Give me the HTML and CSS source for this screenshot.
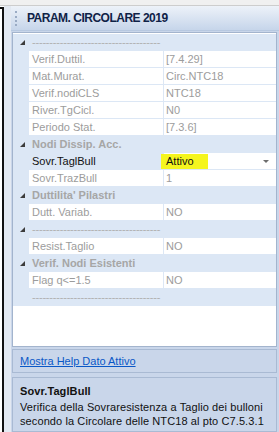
FILE: index.html
```html
<!DOCTYPE html>
<html lang="it">
<head>
    <meta charset="UTF-8">
    <title>Param. Circolare 2019</title>
    <link rel="stylesheet" href="styles.css">
</head>
<body>
    <div class="window">
        <div class="topstrip"></div>
        <div class="main">
            <div class="side"><div class="side-frame"></div></div>
            <div class="side-gap"></div>
            <div class="dock">
                <div class="title">
                    <span class="grip"></span>
                    <span class="title-text">PARAM. CIRCOLARE 2019</span>
                </div>

                <div class="grid">
                    <!-- categoria senza nome -->
                    <div class="row cat">
                        <span class="gutter"><svg width="5" height="5" viewBox="0 0 5 5"><polygon points="5,0 5,5 0,5"/></svg></span>
                        <span class="cat-name dashes">-------------------------------------</span>
                    </div>
                    <div class="row">
                        <span class="gutter"></span>
                        <span class="name">Verif.Duttil.</span>
                        <span class="value">[7.4.29]</span>
                    </div>
                    <div class="row">
                        <span class="gutter"></span>
                        <span class="name">Mat.Murat.</span>
                        <span class="value">Circ.NTC18</span>
                    </div>
                    <div class="row">
                        <span class="gutter"></span>
                        <span class="name">Verif.nodiCLS</span>
                        <span class="value">NTC18</span>
                    </div>
                    <div class="row">
                        <span class="gutter"></span>
                        <span class="name">River.TgCicl.</span>
                        <span class="value">N0</span>
                    </div>
                    <div class="row">
                        <span class="gutter"></span>
                        <span class="name">Periodo Stat.</span>
                        <span class="value">[7.3.6]</span>
                    </div>

                    <div class="row cat">
                        <span class="gutter"><svg width="5" height="5" viewBox="0 0 5 5"><polygon points="5,0 5,5 0,5"/></svg></span>
                        <span class="cat-name">Nodi Dissip. Acc.</span>
                    </div>
                    <div class="row selected">
                        <span class="gutter"></span>
                        <span class="name">Sovr.TaglBull</span>
                        <span class="value">
                            <span class="hilite">Attivo</span>
                            <svg class="arrow" width="6" height="3" viewBox="0 0 6 3"><polygon points="0,0 6,0 3,3"/></svg>
                        </span>
                    </div>
                    <div class="row">
                        <span class="gutter"></span>
                        <span class="name">Sovr.TrazBull</span>
                        <span class="value">1</span>
                    </div>

                    <div class="row cat">
                        <span class="gutter"><svg width="5" height="5" viewBox="0 0 5 5"><polygon points="5,0 5,5 0,5"/></svg></span>
                        <span class="cat-name">Duttilita' Pilastri</span>
                    </div>
                    <div class="row">
                        <span class="gutter"></span>
                        <span class="name">Dutt. Variab.</span>
                        <span class="value">NO</span>
                    </div>

                    <div class="row cat">
                        <span class="gutter"><svg width="5" height="5" viewBox="0 0 5 5"><polygon points="5,0 5,5 0,5"/></svg></span>
                        <span class="cat-name dashes">-------------------------------------</span>
                    </div>
                    <div class="row">
                        <span class="gutter"></span>
                        <span class="name">Resist.Taglio</span>
                        <span class="value">NO</span>
                    </div>

                    <div class="row cat">
                        <span class="gutter"><svg width="5" height="5" viewBox="0 0 5 5"><polygon points="5,0 5,5 0,5"/></svg></span>
                        <span class="cat-name">Verif. Nodi Esistenti</span>
                    </div>
                    <div class="row">
                        <span class="gutter"></span>
                        <span class="name">Flag q&lt;=1.5</span>
                        <span class="value">NO</span>
                    </div>

                    <div class="row cat">
                        <span class="gutter"></span>
                        <span class="cat-name dashes">-------------------------------------</span>
                    </div>
                </div>

                <div class="helplink">
                    <a href="#">Mostra Help Dato Attivo</a>
                </div>

                <div class="helpbox">
                    <div class="help-title">Sovr.TaglBull</div>
                    <div class="help-text">Verifica della Sovraresistenza a Taglio dei bulloni secondo la Circolare delle NTC18 al pto C7.5.3.1</div>
                </div>
            </div>
        </div>
    </div>
</body>
</html>
```

FILE: styles.css
```css
body {
    margin: 0;
    font-family: "Liberation Sans", Arial, sans-serif;
    font-size: 11px;
    background: #f0f0f0;
}
.window {
    width: 279px;
    height: 432px;
    display: flex;
    flex-direction: column;
    overflow: hidden;
}
.topstrip {
    height: 5px;
    background: #f0f0f0;
    border-bottom: 1px solid #cdcdcd;
}
.main {
    flex: 1;
    display: flex;
    min-height: 0;
}
.side {
    width: 4px;
    background: #ffffff;
}
.side-frame {
    margin-top: 1px;
    height: 100%;
    border-top: 2px solid #111111;
    border-right: 2px solid #111111;
}
.side-gap {
    width: 7px;
    background: #e3e9f2;
}
.dock {
    flex: 1;
    display: flex;
    flex-direction: column;
    background: #c9d6ea;
}
.title {
    height: 25px;
    display: flex;
    align-items: center;
    background: linear-gradient(#edf2f9, #c6d5ea);
    border-bottom: 1px solid #b7c8e0;
}
.grip {
    width: 2px;
    height: 15px;
    margin-left: 4px;
    margin-right: 8px;
    border-left: 2px dotted #9aabc4;
}
.title-text {
    font-weight: bold;
    font-size: 12px;
    letter-spacing: -0.5px;
    color: #0f2247;
}
.grid {
    margin: 1px 2px 0 1px;
    padding-top: 1px;
    height: 319px;
    border: 1px solid #a3b4cd;
    background: #ffffff;
}
.row {
    display: grid;
    grid-template-columns: 16px 135px 1fr;
    height: 17px;
    line-height: 16px;
}
.gutter {
    background: #dce7f5;
    display: flex;
    align-items: center;
    justify-content: center;
}
.gutter svg {
    fill: #3c3c3c;
    margin-left: 2px;
}
.name, .value {
    border-bottom: 1px solid #dce7f5;
    color: #9c9c9c;
    white-space: nowrap;
    overflow: hidden;
}
.name {
    padding-left: 3px;
    border-right: 1px solid #dce7f5;
}
.value {
    padding-left: 2px;
    position: relative;
}
.cat {
    background: #dce7f5;
}
.cat-name {
    grid-column: 2 / 4;
    padding-left: 3px;
    font-weight: bold;
    color: #a6a6a6;
}
.cat-name.dashes {
    font-weight: normal;
    color: #b0b0b0;
    letter-spacing: -0.2px;
}
.selected .name {
    background: #dce7f5;
    color: #111111;
}
.selected .value {
    overflow: visible;
}
.hilite {
    position: absolute;
    left: -3px;
    top: 1px;
    height: 15px;
    line-height: 15px;
    padding: 0 14px 0 5px;
    background: #f5f51e;
    color: #111111;
}
.arrow {
    position: absolute;
    right: 7px;
    top: 7px;
    fill: #6d6d6d;
}
.helplink {
    margin: 2px 2px 0 1px;
    height: 23px;
    padding-left: 7px;
    border: 1px solid #a9bad3;
    display: flex;
    align-items: center;
}
.helplink a {
    color: #0a58c7;
}
.helpbox {
    flex: 1;
    margin: 4px 2px 0 1px;
    padding: 6px 7px 3px;
    border: 1px solid #a9bad3;
    color: #111111;
    letter-spacing: 0.1px;
    line-height: 14px;
}
.help-title {
    font-weight: bold;
    margin-bottom: 2px;
}
```
